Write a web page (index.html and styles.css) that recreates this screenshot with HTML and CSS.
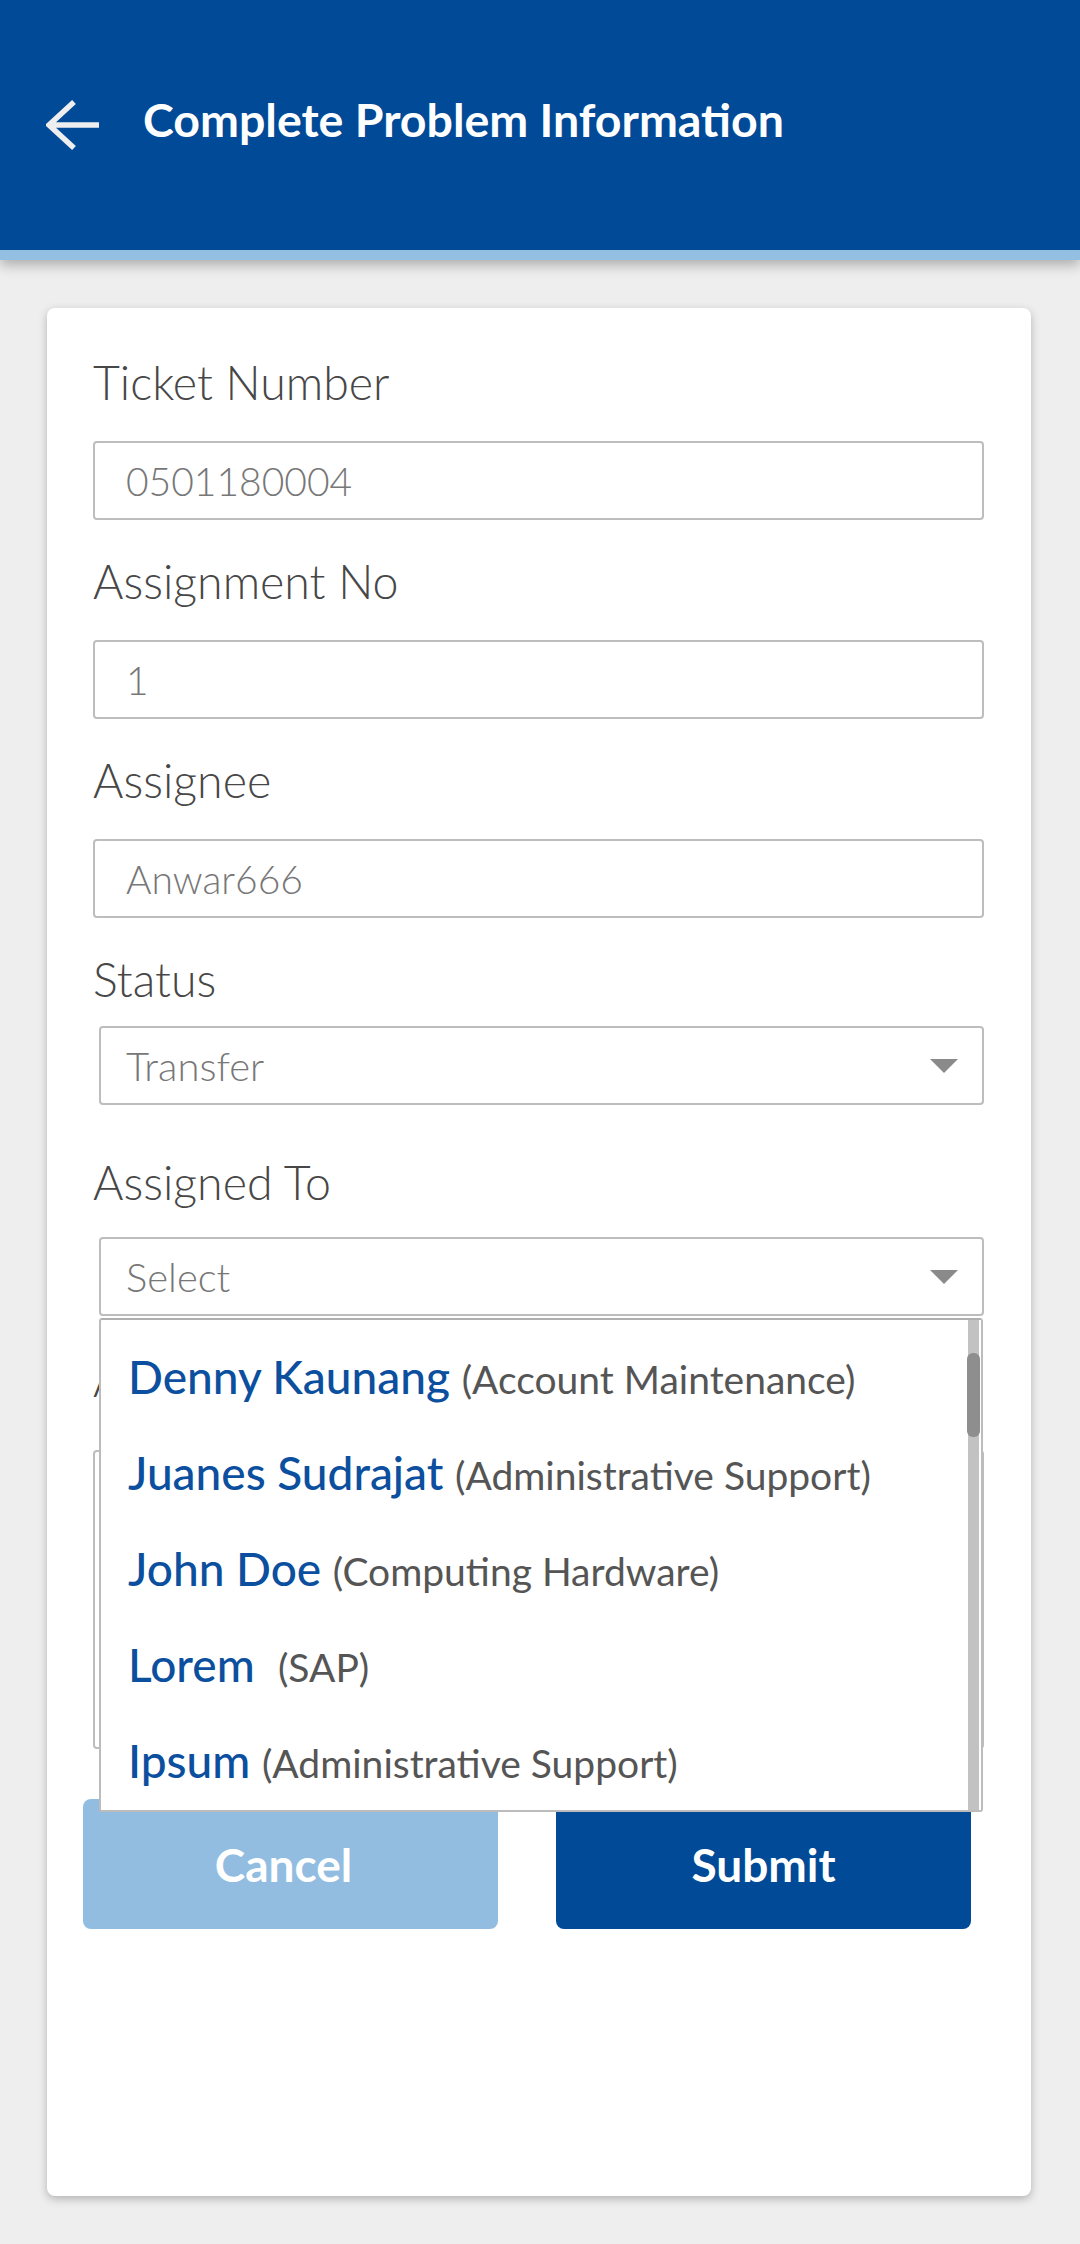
FILE: index.html
```html
<!DOCTYPE html>
<html lang="en">
<head>
<meta charset="utf-8">
<title>Complete Problem Information</title>
<link rel="stylesheet" href="styles.css">
</head>
<body>
<header class="appbar">
  <div class="appbar-row">
    <svg class="back" width="54" height="50" viewBox="0 0 54 50" aria-hidden="true">
      <path d="M3 25H53M28 2L3 25L28 48" fill="none" stroke="#eeeeee" stroke-width="5.5" stroke-linejoin="miter"/>
    </svg>
    <h1 class="title">Complete Problem Information</h1>
  </div>
</header>

<main class="card">
  <div class="field">
    <div class="label">Ticket Number</div>
    <div class="input">0501180004</div>
  </div>
  <div class="field">
    <div class="label">Assignment No</div>
    <div class="input">1</div>
  </div>
  <div class="field">
    <div class="label">Assignee</div>
    <div class="input">Anwar666</div>
  </div>
  <div class="field field-status">
    <div class="label label-status">Status</div>
    <div class="select"><span>Transfer</span><span class="caret"></span></div>
  </div>
  <div class="field field-assigned">
    <div class="label label-assigned">Assigned To</div>
    <div class="select select-open"><span>Select</span><span class="caret"></span>
      <div class="dropdown">
        <div class="dd-item"><span class="dd-name">Denny Kaunang</span> <span class="dd-desc">(Account Maintenance)</span></div>
        <div class="dd-item"><span class="dd-name">Juanes Sudrajat</span> <span class="dd-desc">(Administrative Support)</span></div>
        <div class="dd-item"><span class="dd-name">John Doe</span> <span class="dd-desc">(Computing Hardware)</span></div>
        <div class="dd-item"><span class="dd-name">Lorem</span>&nbsp; <span class="dd-desc">(SAP)</span></div>
        <div class="dd-item"><span class="dd-name">Ipsum</span> <span class="dd-desc">(Administrative Support)</span></div>
        <div class="dd-track"></div>
        <div class="dd-thumb"></div>
      </div>
    </div>
  </div>
  <div class="field field-action">
    <div class="label label-action">Action</div>
    <div class="textarea"></div>
  </div>
  <div class="actions">
    <div class="btn btn-cancel">Cancel</div>
    <div class="btn btn-submit">Submit</div>
  </div>
</main>
</body>
</html>
```

FILE: styles.css
```css
html, body {
  margin: 0;
  padding: 0;
}
body {
  background: #eeeeee;
  font-family: Lato, "Open Sans", "Liberation Sans", sans-serif;
  width: 1080px;
  height: 2244px;
  overflow: hidden;
}

.appbar {
  box-sizing: border-box;
  height: 260px;
  background: #004a97;
  border-bottom: 10px solid #92bfe2;
  box-shadow: 0 5px 12px rgba(0, 0, 0, 0.28);
  padding: 91px 0 0 46px;
  position: relative;
  z-index: 1;
}
.appbar-row {
  display: flex;
  align-items: flex-start;
}
.back {
  margin-top: 9px;
  flex: none;
}
.title {
  margin: 0 0 0 43px;
  font-size: 46.5px;
  line-height: 56px;
  font-weight: 700;
  color: #ffffff;
}

.card {
  display: block;
  box-sizing: border-box;
  margin: 48px 0 0 47px;
  width: 984px;
  height: 1888px;
  background: #ffffff;
  border-radius: 8px;
  box-shadow: 0 3px 8px rgba(0, 0, 0, 0.25);
  padding: 45px 47px 0 46px;
}

.field {
  margin-bottom: 32px;
}
.label {
  font-size: 46.5px;
  line-height: 58px;
  font-weight: 300;
  color: #474747;
  margin-bottom: 30px;
}
.input {
  box-sizing: border-box;
  height: 79px;
  border: 2px solid #bdbdbd;
  border-radius: 4px;
  padding-left: 31px;
  display: flex;
  align-items: center;
  font-size: 39px;
  font-weight: 300;
  color: #777777;
}

.field-status {
  margin-bottom: 48px;
}
.label-status {
  margin-bottom: 18px;
}
.field-assigned {
  margin-bottom: 34px;
}
.label-assigned {
  margin-bottom: 26px;
}
.label-action {
  margin-bottom: 42px;
}
.field-action {
  margin-bottom: 50px;
}

.select {
  position: relative;
  box-sizing: border-box;
  margin-left: 6px;
  height: 79px;
  border: 2px solid #bdbdbd;
  border-radius: 4px;
  padding: 0 24px 0 25px;
  display: flex;
  align-items: center;
  justify-content: space-between;
  font-size: 40px;
  font-weight: 300;
  color: #777777;
}
.caret {
  width: 0;
  height: 0;
  border-left: 14.5px solid transparent;
  border-right: 14.5px solid transparent;
  border-top: 14px solid #8a8a8a;
}

.dropdown {
  position: absolute;
  top: 79px;
  left: -2px;
  width: 884px;
  height: 494px;
  box-sizing: border-box;
  background: #ffffff;
  border: 2px solid #bcbcbc;
  border-top-color: #b0b0b0;
  border-radius: 3px;
  padding: 9px 0 0 27px;
  overflow: hidden;
  z-index: 5;
}
.dd-item {
  height: 96px;
  line-height: 96px;
  font-size: 46px;
  font-weight: 500;
  white-space: nowrap;
}
.dd-name {
  color: #0b4f9e;
}
.dd-desc {
  font-size: 39px;
  font-weight: 400;
  line-height: 1;
  color: #555555;
}
.dd-track {
  position: absolute;
  top: 0;
  bottom: 0;
  right: 2px;
  width: 11px;
  background: #c2c2c2;
}
.dd-thumb {
  position: absolute;
  top: 33px;
  right: 1px;
  width: 13px;
  height: 84px;
  border-radius: 6px;
  background: #8e8e8e;
}

.textarea {
  box-sizing: border-box;
  height: 299px;
  border: 2px solid #bdbdbd;
  border-radius: 4px;
}

.actions {
  display: flex;
  gap: 58px;
  margin-left: -10px;
}
.btn {
  box-sizing: border-box;
  width: 415px;
  height: 130px;
  border-radius: 8px;
  display: flex;
  align-items: center;
  justify-content: center;
  font-size: 46px;
  font-weight: 700;
  color: #ffffff;
}
.btn-cancel {
  background: #92bde0;
  padding-right: 14px;
}
.btn-submit {
  background: #004a97;
}
```
